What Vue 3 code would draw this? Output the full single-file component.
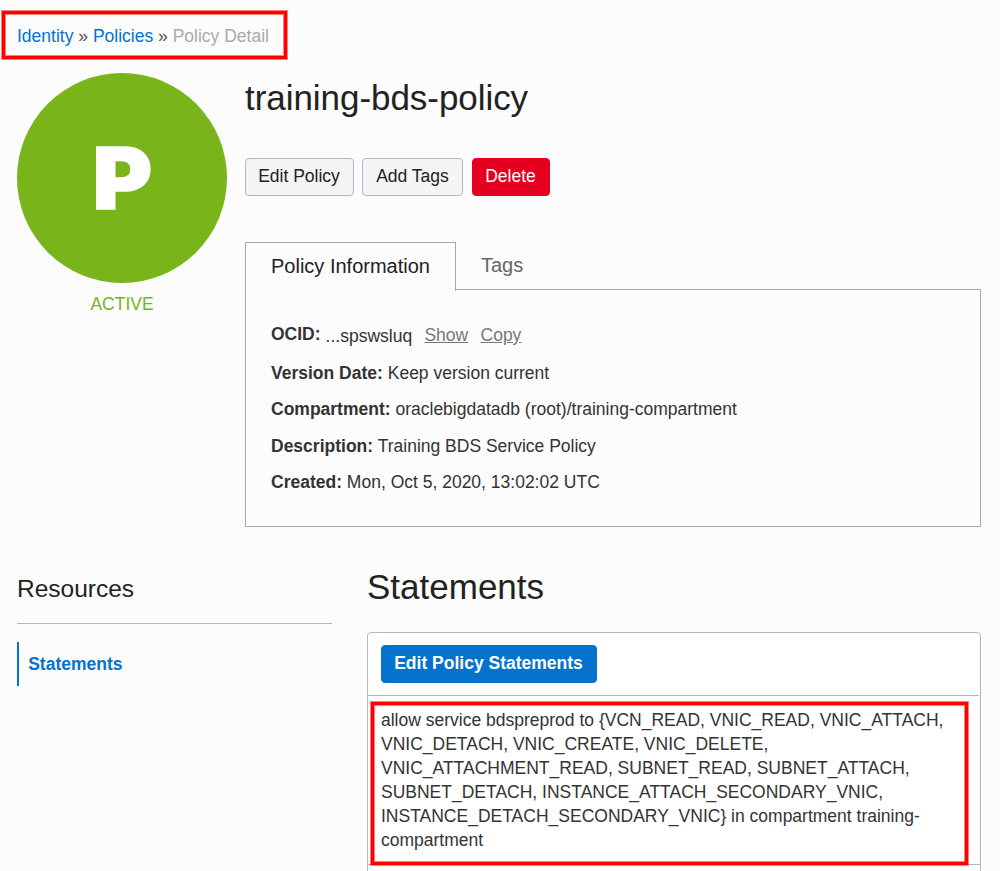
<script setup>
const details = [
  { label: 'Version Date:', value: 'Keep version current' },
  { label: 'Compartment:', value: 'oraclebigdatadb (root)/training-compartment' },
  { label: 'Description:', value: 'Training BDS Service Policy' },
  { label: 'Created:', value: 'Mon, Oct 5, 2020, 13:02:02 UTC' },
]
const statement = 'allow service bdspreprod to {VCN_READ, VNIC_READ, VNIC_ATTACH, VNIC_DETACH, VNIC_CREATE, VNIC_DELETE, VNIC_ATTACHMENT_READ, SUBNET_READ, SUBNET_ATTACH, SUBNET_DETACH, INSTANCE_ATTACH_SECONDARY_VNIC, INSTANCE_DETACH_SECONDARY_VNIC} in compartment training-compartment'
</script>

<template>
  <div class="page">
    <nav class="crumbs">
      <a>Identity</a> » <a>Policies</a> » <span class="current">Policy Detail</span>
      <i class="highlight crumb-highlight"></i>
    </nav>

    <section class="overview">
      <div class="status">
        <div class="badge"><span class="letter">P</span></div>
        <div class="state">ACTIVE</div>
      </div>
      <div class="main">
        <h1>training-bds-policy</h1>
        <div class="actions">
          <button class="btn edit">Edit Policy</button>
          <button class="btn add">Add Tags</button>
          <button class="btn danger">Delete</button>
        </div>
        <div class="tabs">
          <div class="tab active">Policy Information</div>
          <div class="tab">Tags</div>
        </div>
        <div class="panel">
          <div class="row ocid">
            <b>OCID:</b><span class="id">...spswsluq</span><a>Show</a><a>Copy</a>
          </div>
          <div v-for="d in details" :key="d.label" class="row"><b>{{ d.label }}</b> {{ d.value }}</div>
        </div>
      </div>
    </section>

    <section class="lower">
      <aside>
        <h2>Resources</h2>
        <div class="side-item">Statements</div>
      </aside>
      <div class="statements">
        <h1>Statements</h1>
        <div class="card">
          <div class="toolbar"><button class="btn primary">Edit Policy Statements</button></div>
          <div class="statement">
            <p>{{ statement }}</p>
            <i class="highlight statement-highlight"></i>
          </div>
        </div>
      </div>
    </section>
  </div>
</template>

<style>
html, body { margin: 0; overflow: hidden; background: #fcfcfc; }
</style>

<style scoped>
.page {
  box-sizing: border-box;
  width: 1000px;
  height: 871px;
  padding: 24px 19px 0 17px;
  overflow: hidden;
  background: #fcfcfc;
  color: #333;
  font-family: "Liberation Sans", Arial, sans-serif;
  font-size: 17.5px;
  line-height: 24px;
}
.crumbs { position: relative; height: 49px; color: #555; white-space: nowrap; }
.crumbs a { color: #0572ce; }
.crumbs .current { color: #aaa; }
.highlight {
  position: absolute; box-sizing: border-box; border: 3px solid #f00; pointer-events: none;
  box-shadow: 0 0 0 1px rgba(255, 0, 0, .5), inset 0 0 0 1px rgba(255, 0, 0, .5);
}
.crumb-highlight { left: -15px; top: -13px; width: 285px; height: 48px; }
.overview { display: flex; gap: 18px; height: 454px; }
.status { width: 210px; text-align: center; }
.badge {
  display: flex; align-items: center; justify-content: center;
  width: 210px; height: 210px; border-radius: 50%;
  background: #78b41a; color: #fff;
}
.letter {
  font-family: Inter, sans-serif; font-weight: 900; font-size: 85px; line-height: 100px;
  -webkit-text-stroke: 1.4px #fff; transform: translate(0.5px, 0.5px) scaleX(1.07);
}
.state { margin-top: 9px; color: #78b41a; }
.main { width: 736px; }
h1, h2, p { margin: 0; font-weight: 400; color: #222; }
h1 { font-size: 35px; line-height: 42px; }
.main h1 { padding-top: 4px; letter-spacing: -0.05px; }
.actions { display: flex; margin-top: 39px; }
.btn {
  box-sizing: border-box; height: 38px; padding: 0 1px 2px 0; border: 1px solid #aeb8c6; border-radius: 4px;
  background: #f5f5f5; color: #222; font: 17.5px "Liberation Sans", Arial, sans-serif; white-space: nowrap;
}
.edit { width: 109px; margin-right: 8px; }
.add { width: 101px; margin-right: 9px; padding-right: 0; }
.danger { width: 78px; border-color: #e6001f; background: #e6001f; color: #fff; }
.tabs { display: flex; height: 48px; margin-top: 46px; }
.tab { padding: 11px 25px 0; font-size: 20px; color: #666; height: 37px; white-space: nowrap; }
.tab.active {
  position: relative; box-sizing: border-box; width: 211px; height: 49px; flex: none;
  border: 1px solid #a8a8a8; border-bottom: 0; background: #fcfcfc; color: #222;
}
.panel { box-sizing: border-box; height: 238px; margin-top: -1px; padding: 26px 25px 0; border: 1px solid #a8a8a8; }
.row { height: 36.4px; line-height: 36.4px; white-space: nowrap; }
.ocid { display: flex; height: 39px; }
.ocid .id { margin-left: 5px; padding-top: 2px; }
.ocid a { margin-left: 12.3px; padding-top: 1px; color: #777; text-decoration: underline; }
.lower { display: flex; gap: 35px; }
aside { width: 315px; padding-top: 46px; }
h2 { height: 50px; border-bottom: 1px solid #b3b9c6; font-size: 24.5px; line-height: 31px; }
.side-item {
  height: 44px; margin-top: 18px; padding-left: 9.2px; border-left: 2px solid #0572ce;
  color: #0572ce; font-weight: 700; line-height: 44px;
}
.statements { width: 614px; padding-top: 39px; }
.card {
  box-sizing: border-box; height: 260px; margin-top: 24px; border: 1px solid #aeb8c2;
  border-radius: 4px; background: #fff;
}
.toolbar { height: 50px; margin-right: 1px; padding: 12px 13px 0; border-bottom: 1px solid #aeb8c2; }
.primary { width: 216px; border-color: #0572ce; background: #0572ce; color: #fff; font-weight: 700; }
.statement { position: relative; height: 156px; padding: 12px 30px 0 13px; border-bottom: 1px solid #aeb8c2; }
.statement p { color: #333; }
.statement-highlight { left: 3px; top: 6px; width: 597px; height: 163px; }
</style>
